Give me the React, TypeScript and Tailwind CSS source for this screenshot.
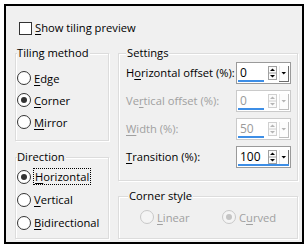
import type { ReactNode } from "react"

const Mn = ({ text, at }: { text: string; at: number }) => (
  <>
    {text.slice(0, at)}
    <span className="underline underline-offset-2 decoration-1">{text[at]}</span>
    {text.slice(at + 1)}
  </>
)

const Group = ({ title, titleLeft, className, children }: { title: string; titleLeft: string; className: string; children: ReactNode }) => (
  <div className={"relative border border-[#dcdcdc] shadow-[inset_1px_1px_0_#fff,1px_1px_0_#fff] " + className}>
    <span className={"absolute -top-[9px] bg-[#f0f0f0] pr-[1px] leading-[16px] text-black " + titleLeft}>{title}</span>
    {children}
  </div>
)

const Radio = ({ label, at, checked, disabled, focus }: { label: string; at: number; checked?: boolean; disabled?: boolean; focus?: boolean }) => (
  <div className={"flex items-center gap-[3px] " + (disabled ? "text-[#a0a0a0]" : "text-black")}>
    <span
      className={
        "flex h-[14px] w-[14px] items-center justify-center rounded-full border " +
        (disabled ? "border-[#c8c8c8] bg-[#f4f4f4]" : "border-[#333] bg-white")
      }
    >
      {checked && <span className={"h-[6px] w-[6px] rounded-full " + (disabled ? "bg-[#c4c4c4]" : "bg-[#333]")} />}
    </span>
    <span className={"leading-[15px] " + (focus ? "outline-1 outline-dotted outline-black outline-offset-0 px-[1px]" : "")}>
      <Mn text={label} at={at} />
    </span>
  </div>
)

const Spin = ({ value, line, disabled }: { value: string; line: string; disabled?: boolean }) => {
  const ink = disabled ? "#b5b5b5" : "#000"
  return (
    <div className={"relative flex h-[22px] w-[55px] shrink-0 items-start border bg-white " + (disabled ? "border-[#cacaca] text-[#9a9a9a]" : "border-[#9a9a9a] text-black")}>
      <span className="flex-1 pl-[3px] pt-[2px] text-[12px] leading-[16px]">{value}</span>
      <svg width="9" height="14" className="mt-[3px]">
        <rect x="0.5" y="0.5" width="8" height="13" fill="#fbfbfb" stroke={disabled ? "#d0d0d0" : "#a0a0a0"} />
        <line x1="1" y1="7" x2="8" y2="7" stroke={disabled ? "#d0d0d0" : "#a0a0a0"} />
        <polygon points="2,5 7,5 4.5,2.5" fill={ink} />
        <polygon points="2,9 7,9 4.5,11.5" fill={ink} />
      </svg>
      <svg width="10" height="16" className="ml-[2px] mr-[1px] mt-[3px]">
        <rect x="0" y="0" width="10" height="16" fill="#fdfdfd" />
        <line x1="0.5" y1="0" x2="0.5" y2="16" stroke="#e6e6e6" />
        <line x1="9.5" y1="0" x2="9.5" y2="16" stroke={disabled ? "#bdbdbd" : "#6b6b6b"} />
        <line x1="0" y1="15.5" x2="10" y2="15.5" stroke={disabled ? "#bdbdbd" : "#6b6b6b"} />
        <polygon points="2.5,6 7,6 4.75,8.5" fill={ink} />
      </svg>
      <span className={"absolute bottom-[1px] left-[1px] h-[2px] bg-[#3d8ee6] " + line} />
    </div>
  )
}

const Row = ({ label, at, disabled, children }: { label: string; at: number; disabled?: boolean; children: ReactNode }) => (
  <div className="flex h-[28px] items-center justify-between pl-[7px] pr-[6px]">
    <span className={"whitespace-nowrap " + (disabled ? "text-[#a0a0a0]" : "text-black")}>
      <Mn text={label} at={at} />
    </span>
    {children}
  </div>
)

export default function App() {
  return (
    <div className="h-[248px] w-[307px] whitespace-nowrap bg-white pl-[4px] pt-[4px] font-['Open_Sans',sans-serif] text-[11.2px]">
      <div className="h-[240px] w-[300px] border-2 border-black bg-[#f0f0f0]">
        <div className="flex items-center gap-[3px] pl-[13px] pt-[15px]">
          <span className="h-[13px] w-[13px] border border-[#333] bg-white" />
          <span className="leading-[14px] text-black">
            <Mn text="Show tiling preview" at={0} />
          </span>
        </div>
        <div className="mt-[18px] flex gap-[9px] pl-[9px]">
          <div className="flex w-[94px] flex-col gap-[16px]">
            <Group title="Tiling method" titleLeft="left-[1px]" className="h-[88px] pt-[13px]">
              <div className="flex h-[22px] items-center pl-[1px]"><Radio label="Edge" at={0} /></div>
              <div className="flex h-[22px] items-center pl-[1px]"><Radio label="Corner" at={0} checked /></div>
              <div className="flex h-[22px] items-center pl-[1px]"><Radio label="Mirror" at={0} /></div>
            </Group>
            <Group title="Direction" titleLeft="left-[1px]" className="h-[82px] pt-[7px]">
              <div className="flex h-[23px] items-center pl-[1px]"><Radio label="Horizontal" at={0} checked focus /></div>
              <div className="flex h-[23px] items-center pl-[1px]"><Radio label="Vertical" at={0} /></div>
              <div className="flex h-[23px] items-center pl-[1px]"><Radio label="Bidirectional" at={0} /></div>
            </Group>
          </div>
          <div className="flex w-[180px] flex-col gap-[15px]">
            <Group title="Settings" titleLeft="left-[7px] pl-[1px]" className="h-[128px] pt-[5px]">
              <Row label="Horizontal offset (%):" at={1}>
                <Spin value="0" line="w-[26px]" />
              </Row>
              <Row label="Vertical offset (%):" at={2} disabled>
                <Spin value="0" line="w-[26px]" disabled />
              </Row>
              <Row label="Width (%):" at={0} disabled>
                <Spin value="50" line="w-[26px]" disabled />
              </Row>
              <Row label="Transition (%):" at={0}>
                <Spin value="100" line="w-[51px]" />
              </Row>
            </Group>
            <Group title="Corner style" titleLeft="left-[9px] pl-[1px]" className="h-[43px] pt-[13px]">
              <div className="flex h-[14px] items-center pl-[21px]">
                <div className="w-[82px]"><Radio label="Linear" at={0} disabled /></div>
                <Radio label="Curved" at={1} checked disabled />
              </div>
            </Group>
          </div>
        </div>
      </div>
    </div>
  )
}
